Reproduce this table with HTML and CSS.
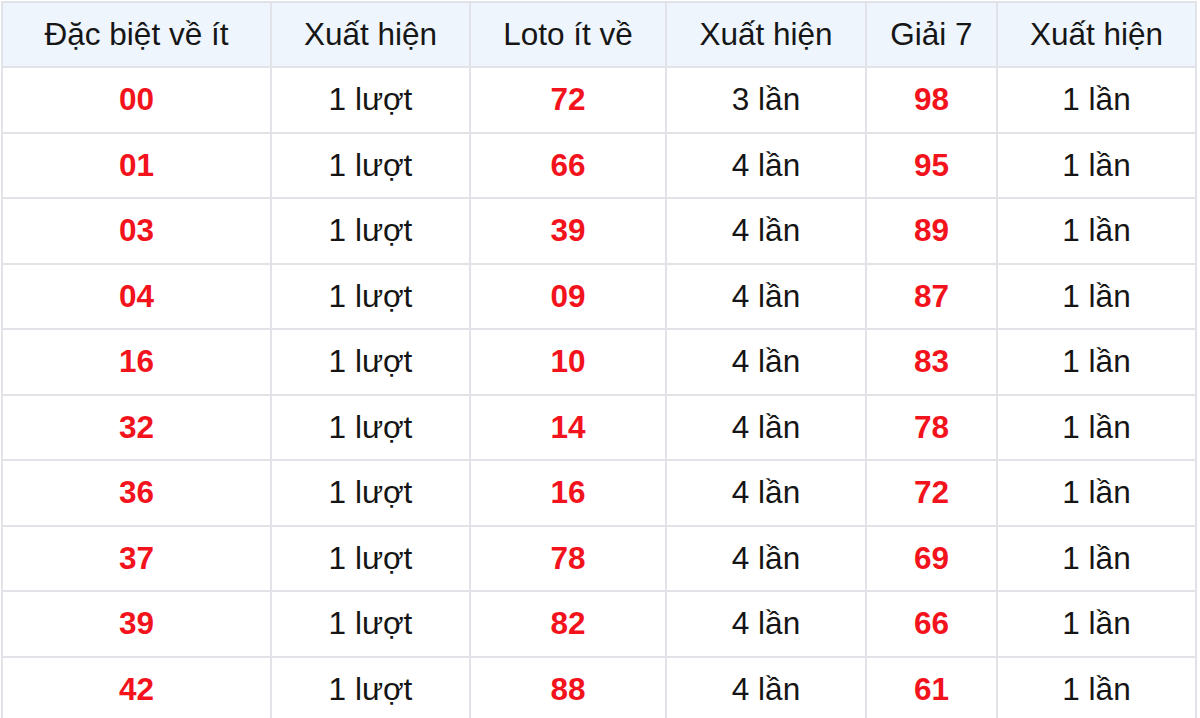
FILE: index.html
```html
<!DOCTYPE html>
<html lang="vi">
<head>
<meta charset="utf-8">
<link rel="stylesheet" href="styles.css">
</head>
<body>
<table class="stats">
  <colgroup>
    <col class="c1"><col class="c2"><col class="c3"><col class="c4"><col class="c5"><col class="c6">
  </colgroup>
  <thead>
    <tr><th>Đặc biệt về ít</th><th>Xuất hiện</th><th>Loto ít về</th><th>Xuất hiện</th><th>Giải 7</th><th>Xuất hiện</th></tr>
  </thead>
  <tbody>
    <tr><td class="num">00</td><td>1 lượt</td><td class="num">72</td><td>3 lần</td><td class="num">98</td><td>1 lần</td></tr>
    <tr><td class="num">01</td><td>1 lượt</td><td class="num">66</td><td>4 lần</td><td class="num">95</td><td>1 lần</td></tr>
    <tr><td class="num">03</td><td>1 lượt</td><td class="num">39</td><td>4 lần</td><td class="num">89</td><td>1 lần</td></tr>
    <tr><td class="num">04</td><td>1 lượt</td><td class="num">09</td><td>4 lần</td><td class="num">87</td><td>1 lần</td></tr>
    <tr><td class="num">16</td><td>1 lượt</td><td class="num">10</td><td>4 lần</td><td class="num">83</td><td>1 lần</td></tr>
    <tr><td class="num">32</td><td>1 lượt</td><td class="num">14</td><td>4 lần</td><td class="num">78</td><td>1 lần</td></tr>
    <tr><td class="num">36</td><td>1 lượt</td><td class="num">16</td><td>4 lần</td><td class="num">72</td><td>1 lần</td></tr>
    <tr><td class="num">37</td><td>1 lượt</td><td class="num">78</td><td>4 lần</td><td class="num">69</td><td>1 lần</td></tr>
    <tr><td class="num">39</td><td>1 lượt</td><td class="num">82</td><td>4 lần</td><td class="num">66</td><td>1 lần</td></tr>
    <tr><td class="num">42</td><td>1 lượt</td><td class="num">88</td><td>4 lần</td><td class="num">61</td><td>1 lần</td></tr>
  </tbody>
</table>
</body>
</html>
```

FILE: styles.css
```css
html, body {
  margin: 0;
  padding: 0;
  background: #ffffff;
}
body {
  font-family: "Liberation Sans", Arial, sans-serif;
  color: #151515;
}
.stats {
  margin: 1px 0 0 1px;
  width: 1196px;
  border-collapse: collapse;
  table-layout: fixed;
}
.c1 { width: 269px; }
.c2 { width: 199px; }
.c3 { width: 196px; }
.c4 { width: 200px; }
.c5 { width: 131px; }
.c6 { width: 199px; }
.stats th,
.stats td {
  border: 2px solid #e2e3e8;
  padding: 0;
  text-align: center;
  vertical-align: middle;
  font-size: 31.5px;
  font-weight: normal;
  line-height: 1;
}
.stats thead tr {
  height: 65px;
}
.stats tbody tr {
  height: 65.5px;
}
.stats th {
  background: #eef5fd;
  color: #161616;
}
.stats td.num {
  color: #f2131c;
  font-weight: bold;
}
```
